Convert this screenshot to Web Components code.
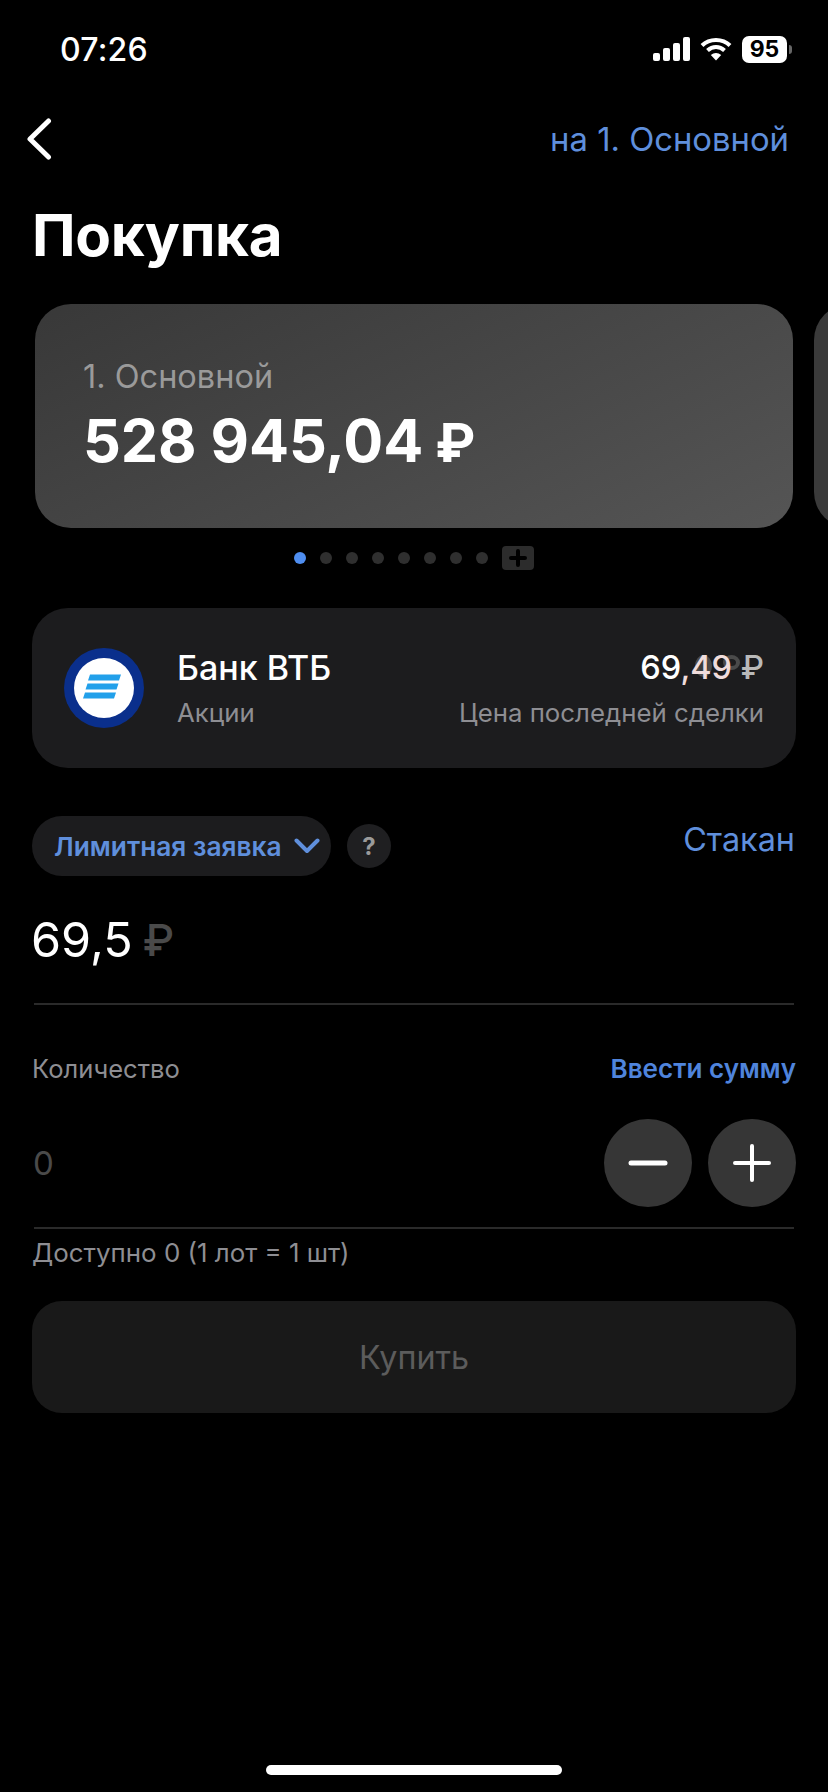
<!DOCTYPE html>
<html lang="ru">

<head>
  <meta charset="utf-8">
  <meta name="viewport" content="width=device-width">
  <title>Покупка</title>
  <style>
    html, body { margin: 0; background: #000; }
    body { width: 828px; height: 1792px; overflow: hidden; font-family: Inter, "Noto Sans", sans-serif; color: #fff; }
    #app { display: flex; flex-direction: column; height: 1792px; }
  </style>
</head>

<body>
<div id="app">
  <status-bar time="07:26" battery="95"></status-bar>
  <nav-header target="на 1. Основной">Покупка</nav-header>
  <account-carousel name="1. Основной" amount="528 945,04"></account-carousel>
  <pager-dots count="8"></pager-dots>
  <instrument-card name="Банк ВТБ" kind="Акции" note="Цена последней сделки"></instrument-card>
  <order-type label="Лимитная заявка" link="Стакан"></order-type>
  <price-field value="69,5"></price-field>
  <qty-field label="Количество" link="Ввести сумму" value="0" hint="Доступно 0 (1 лот = 1 шт)"></qty-field>
  <buy-button>Купить</buy-button>
  <home-indicator></home-indicator>
</div>

<script>
    // small helper, every element below has the same shape
    function define (name, render) {
        customElements.define(name, class extends HTMLElement {
            constructor () {
                super();
                const shadowRoot = this.attachShadow({ mode: 'open' });
                shadowRoot.innerHTML = render(this);
            }
        });
    }

    define('status-bar', (el) => `
      <style>
        :host { display: flex; align-items: center; justify-content: space-between; height: 50px; margin-top: 24px; padding: 0 36px 0 60px; flex: none; }
        .time { font-size: 32px; font-weight: 500; letter-spacing: .2px; }
        .icons { display: flex; align-items: center; gap: 10px; }
        .batt { display: flex; align-items: center; gap: 2px; }
        .cell { width: 45px; height: 27px; border-radius: 7px; background: #fff; color: #000; font-size: 23px; font-weight: 700; display: flex; align-items: center; justify-content: center; }
        .nub { width: 3px; height: 9px; background: #666; border-radius: 0 3px 3px 0; }
      </style>
      <span class="time">${el.getAttribute('time')}</span>
      <span class="icons">
        <svg width="37" height="24" viewBox="0 0 37 24" fill="#fff">
          <rect x="0" y="16" width="7" height="8" rx="2"/>
          <rect x="10" y="11" width="7" height="13" rx="2"/>
          <rect x="20" y="6" width="7" height="18" rx="2"/>
          <rect x="30" y="0" width="7" height="24" rx="2"/>
        </svg>
        <svg width="32" height="24" viewBox="0 0 32 24" fill="none" stroke="#fff" stroke-width="4">
          <path d="M2 8.5C9.5 1 22.5 1 30 8.500"/>
          <path d="M7.500 13.500C12.500 8.800 19.500 8.800 24.500 13.500"/>
          <path d="M16 23.500L10.800 18C14 15.200 18 15.200 21.200 18Z" fill="#fff" stroke="none"/>
        </svg>
        <span class="batt"><span class="cell">${el.getAttribute('battery')}</span><span class="nub"></span></span>
      </span>
    `);

    define('nav-header', (el) => `
      <style>
        :host { display: block; flex: none; padding: 0 32px; }
        .row { display: flex; align-items: center; justify-content: space-between; height: 50px; margin-top: 40px; }
        .back { margin-left: -6px; }
        .target { font-size: 32.800px; color: #5f8fdc; margin-right: 7px; }
        h1 { margin: 39px 0 0; font-size: 58.300px; line-height: 64px; font-weight: 700; letter-spacing: -.3px; }
      </style>
      <div class="row">
        <svg class="back" width="26" height="42" viewBox="0 0 26 42" fill="none" stroke="#fff" stroke-width="5" stroke-linecap="round" stroke-linejoin="round">
          <path d="M22.500 3L4 21L22.500 39"/>
        </svg>
        <span class="target">${el.getAttribute('target')}</span>
      </div>
      <h1><slot></slot></h1>
    `);

    define('account-carousel', (el) => `
      <style>
        :host { display: flex; gap: 21px; flex: none; height: 224px; margin-top: 37px; padding-left: 35px; overflow: hidden; }
        .card { flex: none; width: 758px; height: 224px; box-sizing: border-box; border-radius: 36px; padding: 55px 48px; background: linear-gradient(155deg, #383838, #555); }
        .name { font-size: 32.500px; line-height: 36px; color: #9a9a9a; }
        .amount { margin-top: 12px; font-size: 59.300px; line-height: 68px; font-weight: 700; letter-spacing: -.1px; }
        .amount span { font-size: 54px; margin-left: -2px; }
        .next { flex: none; width: 60px; height: 224px; border-radius: 36px 0 0 36px; background: #3a3a3a; }
      </style>
      <div class="card">
        <div class="name">${el.getAttribute('name')}</div>
        <div class="amount">${el.getAttribute('amount')} <span>₽</span></div>
      </div>
      <div class="next"></div>
    `);

    define('pager-dots', (el) => {
        let dots = '';
        for (let i = 0; i < Number(el.getAttribute('count')); i++) {
            dots += `<i class="${i === 0 ? 'on' : ''}"></i>`;
        }
        return `
      <style>
        :host { display: flex; align-items: center; height: 24px; margin-top: 18px; padding-left: 294px; flex: none; }
        i { width: 12px; height: 12px; border-radius: 50%; background: #2f2f2f; margin-right: 14px; }
        i.on { background: #4f8ef0; }
        .add { width: 32px; height: 24px; margin-left: 0; border-radius: 4px; background: #2c2c2c; display: flex; align-items: center; justify-content: center; }
      </style>
      ${dots}
      <span class="add">
        <svg width="20" height="20" viewBox="0 0 20 20" stroke="#000" stroke-width="4" stroke-linecap="round"><path d="M10 3V17M3 10H17"/></svg>
      </span>
    `;
    });

    define('instrument-card', (el) => `
      <style>
        :host { display: flex; align-items: center; flex: none; box-sizing: border-box; width: 764px; height: 160px; margin: 38px 0 0 32px; padding: 1px 32px 0; border-radius: 36px; background: #1c1c1e; }
        .logo { flex: none; width: 80px; height: 80px; margin-right: 33px; margin-top: -1px; }
        .col { display: flex; flex-direction: column; gap: 10px; }
        .col.right { margin-left: auto; align-items: flex-end; }
        .title { font-size: 34px; line-height: 38px; font-weight: 500; }
        .sub { font-size: 25.800px; line-height: 32px; color: #8e8e93; }
        .price { position: relative; isolation: isolate; font-size: 32.500px; }
        .rub { color: #b9b9b9; }
        .tail { color: #f0dcdc; }
        /* leftover of the previous number fading out behind the digits */
        .ghost { position: absolute; z-index: -1; top: 6px; width: 17px; height: 15px; box-sizing: border-box; border: 4px solid #4a4a4a; border-radius: 50%; }
        .ghost.a { right: 52px; height: 22px; background: #3a3a3a; }
        .ghost.b { right: 24px; }
      </style>
      <svg class="logo" viewBox="0 0 80 80">
        <circle cx="40" cy="40" r="40" fill="#0a2f8c"/>
        <circle cx="40" cy="40" r="30" fill="#fff"/>
        <path d="M26 26.500H57L55 32.500H24ZM23.500 35.500H54.500L52.500 41.500H21.500ZM21 44.500H52L50 50.500H19Z" fill="#22a0ea"/>
      </svg>
      <div class="col">
        <span class="title">${el.getAttribute('name')}</span>
        <span class="sub">${el.getAttribute('kind')}</span>
      </div>
      <div class="col right">
        <span class="title price"><i class="ghost a"></i><i class="ghost b"></i>69<span class="tail">,49</span> <span class="rub">₽</span></span>
        <span class="sub">${el.getAttribute('note')}</span>
      </div>
    `);

    define('order-type', (el) => `
      <style>
        :host { display: flex; align-items: center; flex: none; height: 60px; margin: 48px 33px 0 32px; }
        .pill { display: flex; align-items: center; gap: 12px; height: 60px; box-sizing: border-box; width: 299px; padding-left: 22px; border-radius: 30px; background: #1c1c1e; font-size: 26.300px; font-weight: 600; color: #5f8fdc; }
        .help { width: 44px; height: 44px; margin-left: 16px; border-radius: 50%; background: #1f1f21; color: #9a9a9a; font-size: 24px; font-weight: 700; display: flex; align-items: center; justify-content: center; }
        .link { margin-left: auto; margin-top: -13px; font-size: 32.400px; color: #5f8fdc; }
      </style>
      <span class="pill">${el.getAttribute('label')}
        <svg width="26" height="16" viewBox="0 0 26 16" fill="none" stroke="#5f8fdc" stroke-width="4" stroke-linecap="round" stroke-linejoin="round"><path d="M2.500 2.500L13 13L23.500 2.500"/></svg>
      </span>
      <span class="help">?</span>
      <span class="link">${el.getAttribute('link')}</span>
    `);

    define('price-field', (el) => `
      <style>
        :host { display: flex; align-items: center; flex: none; height: 127px; margin: 0 34px; font-size: 48.500px; border-bottom: 2px solid #2a2a2a; }
        .val { margin-left: -3px; }
        .rub { color: #4a4a4a; font-weight: 500; font-size: 44px; margin-left: 10px; }
      </style>
      <span class="val">${el.getAttribute('value')}</span><span class="rub">₽</span>
    `);

    define('qty-field', (el) => `
      <style>
        :host { display: block; flex: none; margin: 45px 32px 0 32px; }
        .head { display: flex; justify-content: space-between; align-items: center; height: 36px; }
        .label { font-size: 25.600px; color: #8e8e93; }
        .link { font-size: 26.100px; font-weight: 600; color: #4f84dc; }
        .row { display: flex; align-items: center; height: 128px; margin: 13px 2px 0; border-bottom: 2px solid #2a2a2a; }
        .val { font-size: 33px; color: #4a4a4a; margin-left: -1px; }
        .btns { display: flex; gap: 16px; margin-left: auto; margin-right: -2px; }
        .btn { width: 88px; height: 88px; border-radius: 50%; background: #363636; display: flex; align-items: center; justify-content: center; }
        .hint { margin-top: 8px; font-size: 25.900px; line-height: 32px; color: #8e8e93; }
      </style>
      <div class="head"><span class="label">${el.getAttribute('label')}</span><span class="link">${el.getAttribute('link')}</span></div>
      <div class="row">
        <span class="val">${el.getAttribute('value')}</span>
        <span class="btns">
          <span class="btn"><svg width="40" height="40" viewBox="0 0 40 40" stroke="#fff" stroke-width="5" stroke-linecap="round"><path d="M3 20H37"/></svg></span>
          <span class="btn"><svg width="40" height="40" viewBox="0 0 40 40" stroke="#fff" stroke-width="4" stroke-linecap="round"><path d="M3 20H37M20 3V37"/></svg></span>
        </span>
      </div>
      <div class="hint">${el.getAttribute('hint')}</div>
    `);

    define('buy-button', () => `
      <style>
        :host { display: flex; align-items: center; justify-content: center; flex: none; width: 764px; height: 112px; margin: 32px 0 0 32px; border-radius: 30px; background: #191919; color: #5c5c5c; font-size: 32.300px; }
      </style>
      <slot></slot>
    `);

    define('home-indicator', () => `
      <style>
        :host { display: flex; justify-content: center; flex: none; margin-top: auto; padding-bottom: 17px; }
        div { width: 296px; height: 10px; border-radius: 5px; background: #fff; }
      </style>
      <div></div>
    `);
</script>

</body>

</html>
